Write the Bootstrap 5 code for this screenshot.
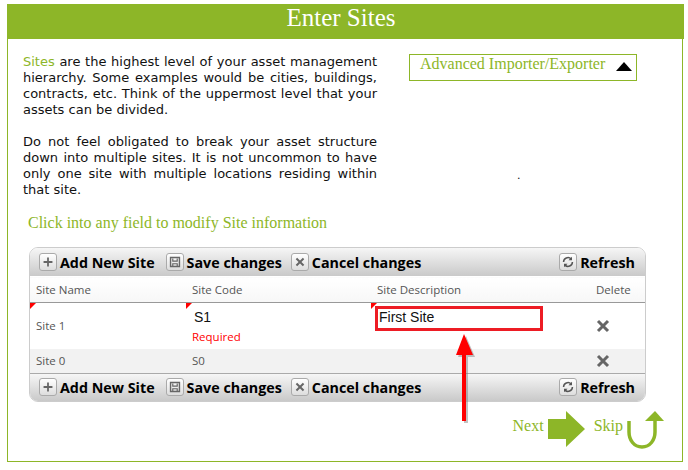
<!DOCTYPE html>
<html lang="en"><head><meta charset="utf-8">
<link href="https://cdn.jsdelivr.net/npm/bootstrap@5.3.0/dist/css/bootstrap.min.css" rel="stylesheet">
<style>
html,body{background:#fff;margin:0;height:470px;overflow:hidden}
.wiz{position:relative;width:676px;height:458px;margin:4px 0 0 7px;border:solid #8db628;border-width:0 1.5px 1.5px 1.5px;font-family:"DejaVu Sans",Verdana,sans-serif;color:#111}
.wiz-head{height:35px;background:#8db628;color:#fff;font:25px/28px "Liberation Serif",serif;text-align:center;margin:0 -1.5px;padding-right:8px}
.serif-g{font-family:"Liberation Serif",serif;color:#8db628;font-size:16px}
.intro{width:354px;margin:0 0 0 15px;padding-top:15px;font-size:13px;line-height:16px;text-align:justify;flex:none}
.intro p{margin:0 0 16px}
.intro b{font-weight:400;color:#8db628}
.adv{width:228px;height:27px;margin:15px 0 0 32px;border:1.5px solid #8db628;padding:0 0 0 10px;line-height:18px}
.tri{width:0;height:0;border:solid transparent;border-width:0 8px 9px;border-bottom-color:#000;margin:7px 4px 0 0}
.dotmark{font-size:11px;line-height:12px;margin:89px 0 0 140px}
.hint{margin:0 0 0 20px;line-height:20px;padding-top:15px}
.gridbox{width:617px;height:155px;margin:14px 0 0 21px;border:1.5px solid #ccc;border-radius:9px;overflow:hidden;font-family:"Open Sans","Noto Sans",sans-serif}
.tb{height:28px;background:linear-gradient(#f6f6f6,#c9c9c9);padding:0 10px 0 9px;gap:3px}
.tb span.lbl{font-weight:700;font-size:14.3px;color:#000;margin-right:6px;padding-top:1px}
.tb span.lbl1{margin-right:8px}
.tb span.lblz{margin-right:0}
.ic{width:18px;height:18px;flex:none;border:1px solid #aaa;border-radius:3px;background:linear-gradient(#fff,#ddd);display:block}
table.sites{width:100%;table-layout:fixed;border-collapse:collapse;font-size:11.5px;color:#555}
table.sites th{height:26px;font-weight:400;color:#555;border-top:1px solid #fff;border-bottom:1.5px solid #999;padding:0 6px;background:linear-gradient(#fff,#f7f7f7)}
table.sites td{padding:0 6px;position:relative}
table.sites .cdel{padding-left:11px}
table.sites .cbox{vertical-align:top;padding-top:3px}
.r1{height:46px}.r2{height:24px;background:#f2f2f2}
.corner{position:absolute;left:0;top:0;width:0;height:0;border:solid transparent;border-width:6px 6px 0 0;border-top-color:#f00}
.val{font:14px/16px "Liberation Sans",sans-serif;color:#111;padding-left:2px;margin-top:3px}
.req{color:#f00;line-height:16px;margin-top:4px}
.redbox{width:168px;height:25px;border:3px solid #ed1c24;margin-left:-2px;font:14px/17px "Liberation Sans",sans-serif;color:#111;padding-left:1px}
.xm{display:block}
.tb2{border-top:1.5px solid #aaa}
.foot{margin-top:9px;padding-right:17px;height:40px}
.foot span{line-height:30px}
.g1{margin-right:4px}.g2{margin-right:9px}.g3{margin-right:4px}
.overlay{position:absolute;left:444px;top:329px}
</style></head><body>
<div class="wiz">
 <div class="wiz-head">Enter Sites</div>
 <div class="d-flex">
  <div class="intro">
   <p><b>Sites</b> are the highest level of your asset management hierarchy. Some examples would be cities, buildings, contracts, etc. Think of the uppermost level that your assets can be divided.</p>
   <p class="mb-0">Do not feel obligated to break your asset structure down into multiple sites. It is not uncommon to have only one site with multiple locations residing within that site.</p>
  </div>
  <div>
   <div class="adv d-flex justify-content-between serif-g"><span>Advanced Importer/Exporter</span><span class="tri"></span></div>
   <div class="dotmark">.</div>
  </div>
 </div>
 <div class="hint serif-g">Click into any field to modify Site information</div>
 <div class="gridbox">
  <div class="tb d-flex align-items-center">
   <svg class="ic" viewBox="0 0 18 18"><path d="M9 4v10M4 9h10" stroke="#666" stroke-width="2"/></svg><span class="lbl lbl1">Add New Site</span>
   <svg class="ic" viewBox="0 0 18 18"><path d="M4 4h10v10H4z" fill="none" stroke="#666" stroke-width="1.6"/><path d="M6.500 5v3h5V5M6.500 14v-3h5v3" fill="none" stroke="#666" stroke-width="1.3"/></svg><span class="lbl">Save changes</span>
   <svg class="ic" viewBox="0 0 18 18"><path d="M5 5l8 8M13 5l-8 8" stroke="#666" stroke-width="2.2"/></svg><span class="lbl me-auto">Cancel changes</span>
   <svg class="ic" viewBox="0 0 18 18"><path d="M4 9a5 5 0 0 1 8.500-3.500M14 9a5 5 0 0 1-8.500 3.500" fill="none" stroke="#555" stroke-width="1.7"/><path d="M13.500 3v4h-4zM4.500 15v-4h4z" fill="#555"/></svg><span class="lbl lblz">Refresh</span>
  </div>
  <table class="sites">
   <colgroup><col style="width:156px"><col style="width:185px"><col style="width:214px"><col></colgroup>
   <thead><tr><th>Site Name</th><th>Site Code</th><th>Site Description</th><th class="cdel">Delete</th></tr></thead>
   <tbody>
    <tr class="r1"><td><i class="corner"></i>Site 1</td><td><i class="corner"></i><div class="val">S1</div><div class="req">Required</div></td><td class="cbox"><i class="corner"></i><div class="redbox">First Site</div></td><td class="cdel"><svg class="xm" width="14" height="14" viewBox="0 0 14 14"><path d="M2 2l10 10M12 2L2 12" stroke="#666" stroke-width="3"/></svg></td></tr>
    <tr class="r2"><td>Site 0</td><td>S0</td><td></td><td class="cdel"><svg class="xm" width="14" height="14" viewBox="0 0 14 14"><path d="M2 2l10 10M12 2L2 12" stroke="#666" stroke-width="3"/></svg></td></tr>
   </tbody>
  </table>
  <div class="tb tb2 d-flex align-items-center">
   <svg class="ic" viewBox="0 0 18 18"><path d="M9 4v10M4 9h10" stroke="#666" stroke-width="2"/></svg><span class="lbl lbl1">Add New Site</span>
   <svg class="ic" viewBox="0 0 18 18"><path d="M4 4h10v10H4z" fill="none" stroke="#666" stroke-width="1.6"/><path d="M6.500 5v3h5V5M6.500 14v-3h5v3" fill="none" stroke="#666" stroke-width="1.3"/></svg><span class="lbl">Save changes</span>
   <svg class="ic" viewBox="0 0 18 18"><path d="M5 5l8 8M13 5l-8 8" stroke="#666" stroke-width="2.2"/></svg><span class="lbl me-auto">Cancel changes</span>
   <svg class="ic" viewBox="0 0 18 18"><path d="M4 9a5 5 0 0 1 8.500-3.500M14 9a5 5 0 0 1-8.500 3.500" fill="none" stroke="#555" stroke-width="1.7"/><path d="M13.500 3v4h-4zM4.500 15v-4h4z" fill="#555"/></svg><span class="lbl lblz">Refresh</span>
  </div>
 </div>
 <div class="foot d-flex justify-content-end align-items-start serif-g">
  <span class="g1">Next</span>
  <svg width="37" height="37" viewBox="0 0 37 37" class="g2"><path d="M0 8h18V0l19 18-19 18v-8H0z" fill="#8db628"/></svg>
  <span class="g3">Skip</span>
  <svg width="38" height="39" viewBox="0 0 38 39"><path d="M2 10v11c0 8 5 15 13 15s13-7 13-15V9" fill="none" stroke="#8db628" stroke-width="3.500"/><path d="M18 10L28 0l9 10z" fill="#8db628"/></svg>
 </div>
 <svg class="overlay" width="30" height="92" viewBox="0 0 30 92"><path d="M12 1L4 22h6v66h4V22h7z" fill="#777" opacity=".45" transform="translate(2 2)"/><path d="M12 1L4 22h6v66h4V22h7z" fill="#f00"/></svg>
</div>
</body></html>
